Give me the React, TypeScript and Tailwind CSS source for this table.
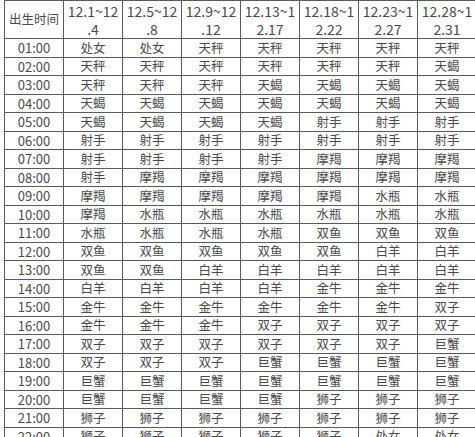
import React from "react";

const headers: [string, string][] = [
  ["12.1~12", ".4"],
  ["12.5~12", ".8"],
  ["12.9~12", ".12"],
  ["12.13~1", "2.17"],
  ["12.18~1", "2.22"],
  ["12.23~1", "2.27"],
  ["12.28~1", "2.31"],
];

const cols: string[][] = [
  ["处女","天秤","天秤","天蝎","天蝎","射手","射手","射手","摩羯","摩羯","水瓶","双鱼","双鱼","白羊","金牛","金牛","双子","双子","巨蟹","巨蟹","狮子","狮子"],
  ["处女","天秤","天秤","天蝎","天蝎","射手","射手","摩羯","摩羯","水瓶","水瓶","双鱼","双鱼","白羊","金牛","金牛","双子","双子","巨蟹","巨蟹","狮子","狮子"],
  ["天秤","天秤","天秤","天蝎","天蝎","射手","射手","摩羯","摩羯","水瓶","水瓶","双鱼","白羊","白羊","金牛","金牛","双子","双子","巨蟹","巨蟹","狮子","狮子"],
  ["天秤","天秤","天蝎","天蝎","天蝎","射手","射手","摩羯","摩羯","水瓶","水瓶","双鱼","白羊","白羊","金牛","双子","双子","巨蟹","巨蟹","巨蟹","狮子","狮子"],
  ["天秤","天秤","天蝎","天蝎","射手","射手","摩羯","摩羯","摩羯","水瓶","双鱼","双鱼","白羊","金牛","金牛","双子","双子","巨蟹","巨蟹","狮子","狮子","狮子"],
  ["天秤","天秤","天蝎","天蝎","射手","射手","摩羯","摩羯","水瓶","水瓶","双鱼","白羊","白羊","金牛","金牛","双子","双子","巨蟹","巨蟹","狮子","狮子","处女"],
  ["天秤","天蝎","天蝎","天蝎","射手","射手","摩羯","摩羯","水瓶","水瓶","双鱼","白羊","白羊","金牛","双子","双子","巨蟹","巨蟹","巨蟹","狮子","狮子","处女"],
];

const times = Array.from({ length: 22 }, (_, i) => `${String(i + 1).padStart(2, "0")}:00`);

const cell = "border-r border-b border-[#5a5a5a] flex items-center justify-center overflow-hidden whitespace-nowrap";

export default function App() {
  return (
    <div
      className="w-[475px] h-[437px] overflow-hidden bg-white text-[#4a4a4a] pl-[4px]"
      style={{ fontFamily: '"Noto Sans CJK SC", "Noto Sans", sans-serif' }}
    >
      <div className="grid grid-cols-[59px_repeat(7,59px)] grid-rows-[38px_repeat(22,18.5px)] border-l border-t border-[#5a5a5a] w-max">
        <div className={`${cell} text-[12.5px]`}>出生时间</div>
        {headers.map(([a, b]) => (
          <div key={a} className="border-r border-b border-[#5a5a5a] flex flex-col items-center pt-[1px] text-[14px] leading-[18px] overflow-hidden whitespace-nowrap">
            <span>{a}</span>
            <span>{b}</span>
          </div>
        ))}
        {times.map((t, r) => (
          <React.Fragment key={t}>
            <div className={`${cell} text-[13px] leading-none`}>{t}</div>
            {cols.map((c, ci) => (
              <div key={ci} className={`${cell} text-[12.5px] leading-none`}>{c[r]}</div>
            ))}
          </React.Fragment>
        ))}
      </div>
    </div>
  );
}
